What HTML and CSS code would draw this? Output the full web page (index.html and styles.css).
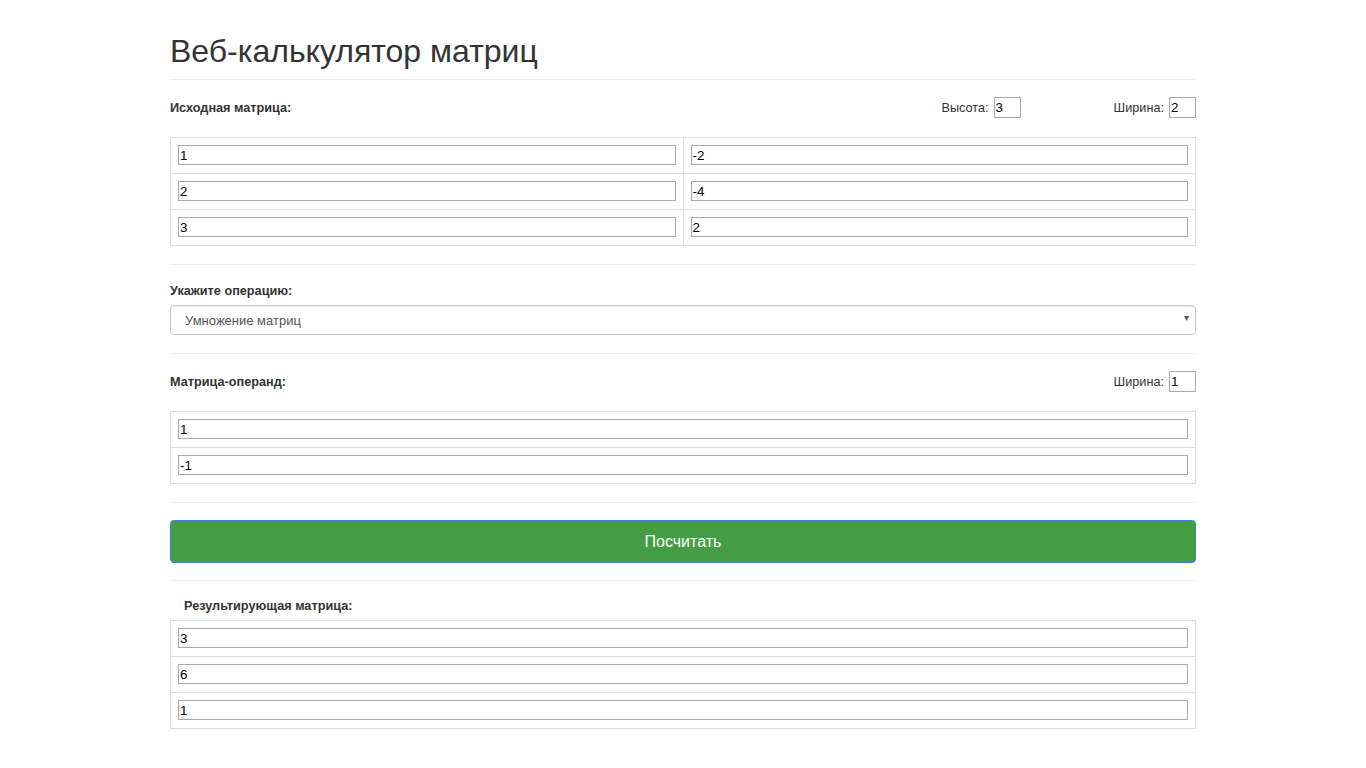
FILE: index.html
```html
<!DOCTYPE html>
<html lang="ru">
<head>
<meta charset="utf-8">
<title>Веб-калькулятор матриц</title>
<link rel="stylesheet" href="styles.css">
</head>
<body>
<div class="container">
  <h1 class="title">Веб-калькулятор матриц</h1>
  <hr class="sep">

  <div class="head-row">
    <span class="label">Исходная матрица:</span>
    <div class="dims">
      <label class="dim">Высота: <input class="dim-input" type="text" value="3"></label>
      <label class="dim">Ширина: <input class="dim-input" type="text" value="2"></label>
    </div>
  </div>
  <table class="matrix">
    <tr><td><input class="cell" type="text" value="1"></td><td><input class="cell" type="text" value="-2"></td></tr>
    <tr><td><input class="cell" type="text" value="2"></td><td><input class="cell" type="text" value="-4"></td></tr>
    <tr><td><input class="cell" type="text" value="3"></td><td><input class="cell" type="text" value="2"></td></tr>
  </table>
  <hr class="sep">

  <div class="op-block">
    <div class="label op-label">Укажите операцию:</div>
    <div class="select-wrap">
      <select class="select">
        <option>Умножение матриц</option>
      </select>
      <span class="select-arrow">▾</span>
    </div>
  </div>
  <hr class="sep">

  <div class="head-row">
    <span class="label">Матрица-операнд:</span>
    <div class="dims">
      <label class="dim">Ширина: <input class="dim-input" type="text" value="1"></label>
    </div>
  </div>
  <table class="matrix">
    <tr><td><input class="cell" type="text" value="1"></td></tr>
    <tr><td><input class="cell" type="text" value="-1"></td></tr>
  </table>
  <hr class="sep">

  <div class="btn-block">
    <button class="btn-calc" type="button">Посчитать</button>
  </div>
  <hr class="sep">

  <div class="label result-label">Результирующая матрица:</div>
  <table class="matrix">
    <tr><td><input class="cell" type="text" value="3"></td></tr>
    <tr><td><input class="cell" type="text" value="6"></td></tr>
    <tr><td><input class="cell" type="text" value="1"></td></tr>
  </table>
</div>
</body>
</html>
```
FILE: styles.css
```css
html, body {
  margin: 0;
  padding: 0;
  background: #fff;
}
body {
  font-family: "Liberation Sans", Arial, sans-serif;
  font-size: 13px;
  color: #333;
}
.container {
  width: 1026px;
  margin: 0 auto;
}
.title {
  font-size: 32px;
  font-weight: 400;
  line-height: 35px;
  margin: 34px 0 10px;
  color: #333;
}
.sep {
  border: 0;
  border-top: 1px solid #eee;
  margin: 0;
  height: 0;
}
.head-row {
  display: flex;
  justify-content: space-between;
  align-items: center;
  height: 21px;
  margin: 17px 0 19px;
}
.label {
  font-weight: 700;
  font-size: 12.7px;
}
.dims {
  display: flex;
  gap: 93px;
}
.dim {
  display: flex;
  align-items: center;
  gap: 5px;
  font-size: 12.7px;
}
.dim-input {
  width: 27px;
  height: 21px;
  box-sizing: border-box;
  border: 1px solid #a9a9a9;
  padding: 0 1px;
  font-family: "Liberation Sans", Arial, sans-serif;
  font-size: 13.33px;
  color: #000;
  margin: 0;
}
.matrix {
  width: 100%;
  border-collapse: collapse;
  margin: 0 0 18px;
  table-layout: fixed;
}
.matrix td {
  border: 1px solid #ddd;
  padding: 7px 7px 8px;
  height: 20px;
}
.cell {
  display: block;
  width: 100%;
  height: 20px;
  box-sizing: border-box;
  border: 1px solid #a9a9a9;
  padding: 0 1px;
  margin: 0;
  font-family: "Liberation Sans", Arial, sans-serif;
  font-size: 13.33px;
  color: #000;
}
.op-block {
  padding: 18px 0 18px;
}
.op-label {
  line-height: 16px;
  margin-bottom: 6px;
}
.select-wrap {
  position: relative;
}
.select {
  display: block;
  width: 100%;
  height: 30px;
  box-sizing: border-box;
  appearance: none;
  -webkit-appearance: none;
  background: #fff;
  border: 1px solid #ccc;
  border-radius: 4px;
  padding: 0 14px;
  font-family: "Liberation Sans", Arial, sans-serif;
  font-size: 13px;
  color: #555;
  box-shadow: inset 0 1px 1px rgba(0,0,0,.075);
}
.select-arrow {
  position: absolute;
  right: 7px;
  top: 7px;
  font-size: 10px;
  color: #555;
  pointer-events: none;
}
.btn-block {
  padding: 17px 0 17px;
}
.btn-calc {
  display: block;
  width: 100%;
  height: 43px;
  box-sizing: border-box;
  background: #449d44;
  border: 1px solid #3d7fd9;
  border-radius: 4px;
  color: #fff;
  font-family: "Liberation Sans", Arial, sans-serif;
  font-size: 16px;
  cursor: pointer;
}
.result-label {
  padding: 17px 0 0 14px;
  line-height: 16px;
  margin-bottom: 6px;
}
```
